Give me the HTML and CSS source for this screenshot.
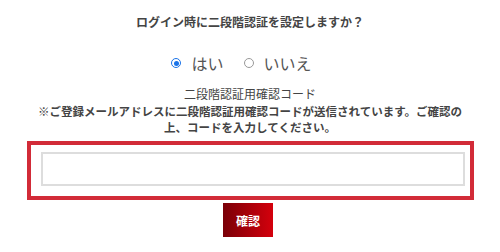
FILE: index.html
```html
<!DOCTYPE html>
<html lang="ja">
<head>
<meta charset="utf-8">
<link rel="stylesheet" href="styles.css">
</head>
<body>
<div class="page">
  <p class="title">ログイン時に二段階認証を設定しますか？</p>
  <div class="radios">
    <label class="opt"><span class="radio checked"></span><span>はい</span></label>
    <label class="opt"><span class="radio"></span><span>いいえ</span></label>
  </div>
  <p class="label">二段階認証用確認コード</p>
  <p class="note">※ご登録メールアドレスに二段階認証用確認コードが送信されています。ご確認の<br>上、コードを入力してください。</p>
  <div class="box">
    <input class="code" type="text">
  </div>
  <button class="btn">確認</button>
</div>
</body>
</html>
```
FILE: styles.css
```css
html, body {
  margin: 0;
  padding: 0;
  background: #fff;
}
body {
  width: 500px;
  height: 252px;
  overflow: hidden;
  font-family: "Noto Sans CJK JP", "Noto Sans", sans-serif;
  color: #333;
}
.page {
  display: flex;
  flex-direction: column;
  align-items: center;
}
.title {
  margin: 14px 0 0;
  font-size: 12px;
  line-height: 16px;
  font-weight: bold;
  color: #444;
}
.radios {
  margin-top: 22px;
  display: flex;
  align-items: center;
  gap: 20px;
  padding-right: 17px;
  height: 22px;
}
.opt {
  display: flex;
  align-items: center;
  gap: 10px;
  font-size: 16px;
  line-height: 22px;
  color: #555;
}
.radio {
  width: 8px;
  height: 8px;
  border-radius: 50%;
  border: 1px solid #999;
  background: #fff;
  box-sizing: content-box;
  position: relative;
}
.radio.checked {
  border-color: #1a73e8;
}
.radio.checked::after {
  content: "";
  position: absolute;
  left: 1.5px;
  top: 1.5px;
  width: 5px;
  height: 5px;
  border-radius: 50%;
  background: #1a73e8;
}
.label {
  margin: 12px 0 0;
  font-size: 12px;
  line-height: 16px;
  color: #444;
}
.note {
  margin: 1px 0 0;
  font-size: 11.5px;
  line-height: 16px;
  font-weight: bold;
  text-align: center;
  color: #444;
}
.box {
  margin-top: 6px;
  width: 447px;
  box-sizing: border-box;
  border: 4px solid #d22b38;
  padding: 7px 6px 10px 10px;
}
.code {
  display: block;
  width: 424px;
  height: 34px;
  box-sizing: border-box;
  border: 2px solid #ddd;
  background: #fff;
  margin: 0;
  padding: 0;
}
.btn {
  margin-top: 3px;
  width: 50px;
  height: 34px;
  border: none;
  background: linear-gradient(to right, #7a0008, #d4000c);
  color: #fff;
  font-family: "Noto Sans CJK JP", sans-serif;
  font-weight: bold;
  font-size: 12px;
  padding: 0;
  margin-left: -4px;
}
```
